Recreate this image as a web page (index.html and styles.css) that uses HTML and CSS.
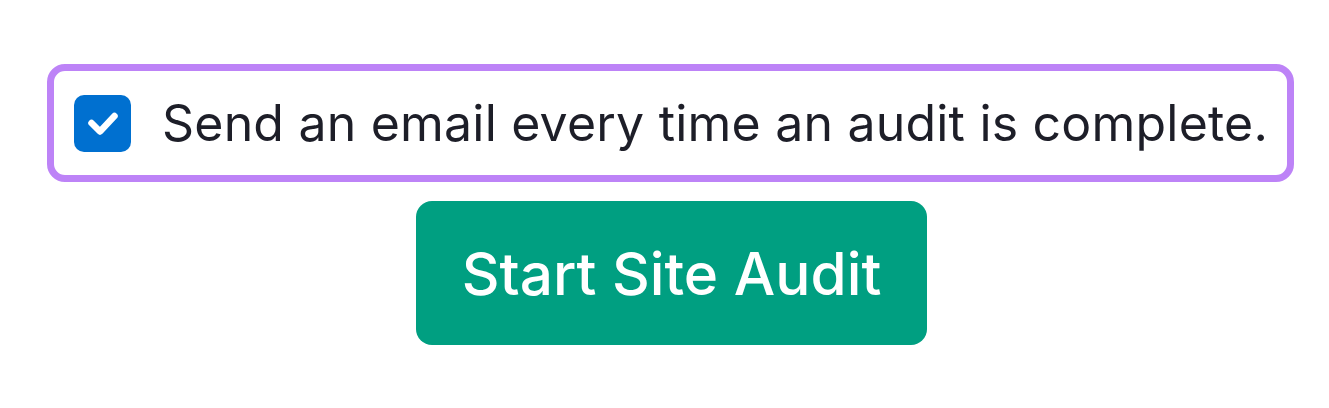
FILE: index.html
```html
<!DOCTYPE html>
<html>
<head>
<meta charset="utf-8">
<link rel="stylesheet" href="styles.css">
</head>
<body>
<div class="wrap">
  <label class="option">
    <span class="check">
      <svg viewBox="0 0 57 57" width="57" height="57"><path d="M17.5 28l8.5 8.5L40.5 21" fill="none" stroke="#fff" stroke-width="6.5" stroke-linecap="round" stroke-linejoin="round"/></svg>
    </span>
    <span class="label">Send an email every time an audit is complete.</span>
  </label>
  <button class="start">Start Site Audit</button>
</div>
</body>
</html>
```
FILE: styles.css
```css
html, body { margin: 0; padding: 0; background: #fff; }
body { font-family: Inter, "Noto Sans", sans-serif; }
.wrap {
  display: flex;
  flex-direction: column;
  align-items: center;
  padding: 64px 0 0 12px;
  gap: 19px;
}
.option {
  display: flex;
  align-items: center;
  box-sizing: border-box;
  width: 1247px;
  height: 118px;
  border: 7px solid #bd83f7;
  border-radius: 18px;
  padding: 0 20px;
}
.check {
  width: 57px;
  height: 57px;
  border-radius: 10px;
  background: #0070d0;
  display: flex;
  flex: none;
}
.label {
  margin-left: 31px;
  font-size: 50px;
  color: #1d1e28;
  letter-spacing: 0.2px;
  white-space: nowrap;
}
.start {
  width: 511px;
  height: 144px;
  margin-left: 2px;
  border: none;
  border-radius: 16px;
  background: #009f81;
  color: #fff;
  font-family: Inter, "Noto Sans", sans-serif;
  font-size: 58.5px;
  font-weight: 500;
  padding: 0;
}
```
